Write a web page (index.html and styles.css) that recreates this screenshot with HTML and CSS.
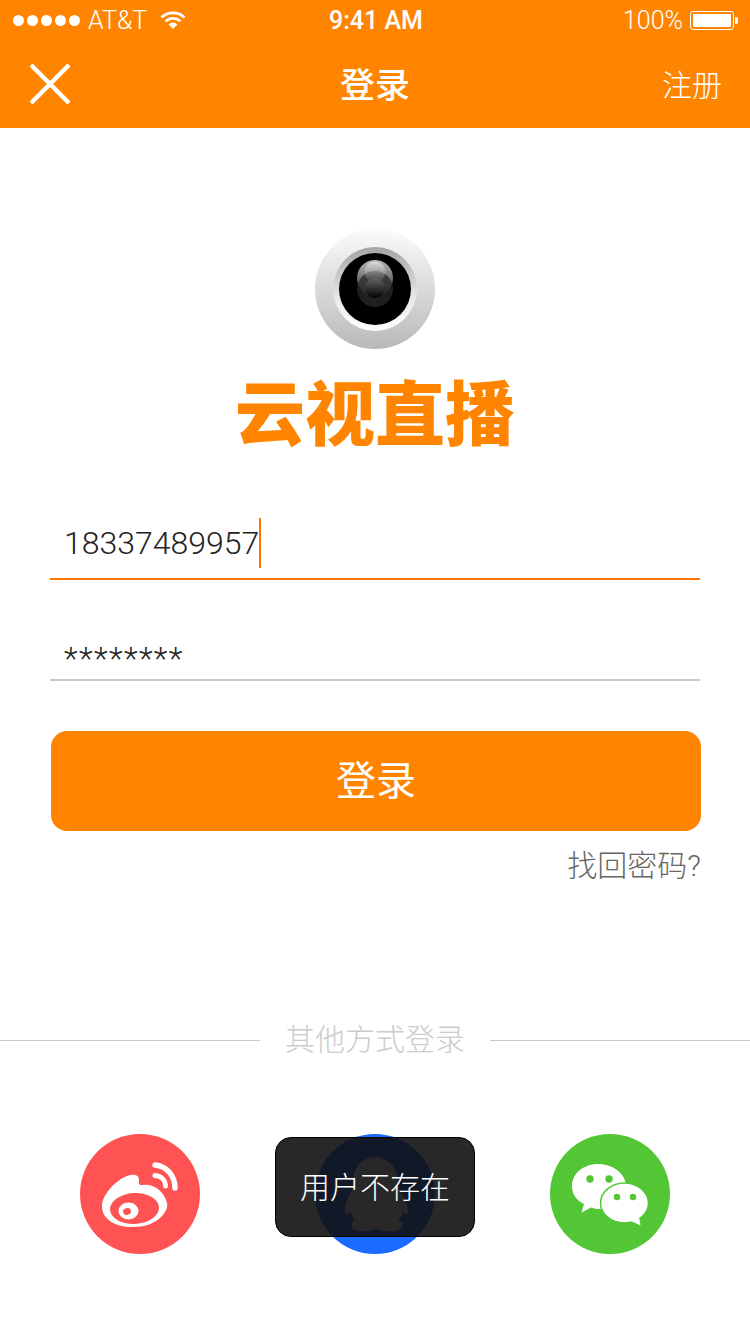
FILE: index.html
```html
<!DOCTYPE html>
<html>
<head>
<meta charset="utf-8">
<title>登录</title>
<link rel="stylesheet" href="styles.css">
</head>

<body>
<div id="wrapper">
	<div class="header">
		<div class="status-bar">
			<div class="status-left">
				<div class="signal"><i></i><i></i><i></i><i></i><i></i></div>
				<span class="carrier">AT&amp;T</span>
				<svg class="wifi" width="26" height="20" viewBox="0 0 26 20">
					<path d="M1.5 7.5a16.5 16.5 0 0 1 23 0" fill="none" stroke="#fff" stroke-width="2.6"/>
					<path d="M5.6 11.4a10.6 10.6 0 0 1 14.8 0" fill="none" stroke="#fff" stroke-width="2.6"/>
					<path d="M8.6 14.4a6.3 6.3 0 0 1 8.8 0L13 19z" fill="#fff"/>
				</svg>
			</div>
			<div class="status-time">9:41 AM</div>
			<div class="status-right">
				<span>100%</span>
				<div class="battery"><div class="battery-level"></div></div>
				<div class="battery-cap"></div>
			</div>
		</div>
		<div class="nav">
			<svg class="close" width="40" height="40" viewBox="0 0 40 40">
				<path d="M1 1L39 39M39 1L1 39" stroke="#fff" stroke-width="4.4" fill="none"/>
			</svg>
			<div class="nav-title">登录</div>
			<div class="nav-link">注册</div>
		</div>
	</div>

	<div class="brand">
		<!-- 镜头图标 -->
		<svg class="lens" width="120" height="120" viewBox="0 0 120 120">
			<defs>
				<linearGradient id="lensOuter" x1="0" y1="0" x2="0" y2="1">
					<stop offset="0" stop-color="#fbfbfb"/>
					<stop offset="1" stop-color="#b9b9bb"/>
				</linearGradient>
				<linearGradient id="lensRing" x1="0" y1="0" x2="0" y2="1">
					<stop offset="0" stop-color="#a4a4a4"/>
					<stop offset="0.6" stop-color="#e8e8e8"/>
					<stop offset="1" stop-color="#ffffff"/>
				</linearGradient>
				<linearGradient id="lensGlow" x1="0" y1="0" x2="0" y2="1">
					<stop offset="0" stop-color="#b8b8b8"/>
					<stop offset="0.6" stop-color="#666"/>
					<stop offset="1" stop-color="#333"/>
				</linearGradient>
				<linearGradient id="lensTop" x1="0" y1="0" x2="0" y2="1">
					<stop offset="0" stop-color="#ddd"/>
					<stop offset="1" stop-color="#888" stop-opacity="0.1"/>
				</linearGradient>
				<linearGradient id="lensPupil" x1="0" y1="0" x2="0" y2="1">
					<stop offset="0" stop-color="#666"/>
					<stop offset="1" stop-color="#000"/>
				</linearGradient>
			</defs>
			<circle cx="60" cy="60" r="60" fill="url(#lensOuter)"/>
			<circle cx="60" cy="60" r="42" fill="url(#lensRing)"/>
			<circle cx="60" cy="60" r="36"/>
			<circle cx="60" cy="49" r="18" fill="url(#lensGlow)"/>
			<circle cx="60" cy="60" r="18" fill="#2a2a2a" opacity="0.75"/>
			<circle cx="60" cy="43" r="10.5" fill="url(#lensTop)"/>
			<circle cx="60" cy="59" r="10" fill="url(#lensPupil)"/>
		</svg>
		<div class="brand-name">云视直播</div>
	</div>

	<div class="form">
		<div class="field field-active">
			<span class="field-text">18337489957</span><span class="caret"></span>
		</div>
		<div class="field">
			<span class="field-text field-secret">********</span>
		</div>
		<div class="btn">登录</div>
		<div class="forgot">找回密码?</div>
	</div>

	<div class="divider">
		<div class="divider-line"></div>
		<div class="divider-text">其他方式登录</div>
		<div class="divider-line"></div>
	</div>

	<div class="social">
		<div class="social-item weibo">
			<svg width="120" height="120" viewBox="0 0 120 120">
				<path d="M22 72C22 62 34 47 47 42C54 39.500 59 41 59 46C59 49 58.500 51 62 51C72 49 84 56 87 69C88 73 86 78 81 83C74 90 64 93 52 93C36 93 22 86 22 72Z" fill="#fff"/>
				<ellipse cx="54.500" cy="74.500" rx="24.500" ry="15.500" fill="#ff5252" transform="rotate(-3 54.500 74.500)"/>
				<ellipse cx="48.500" cy="77" rx="10" ry="8.500" fill="#fff"/>
				<ellipse cx="47" cy="77.500" rx="4" ry="3.300" fill="#ff5252" transform="rotate(-15 47 77.500)"/>
				<path d="M75 31C86 32 95 41 95 54" fill="none" stroke="#fff" stroke-width="5.500" stroke-linecap="round"/>
				<path d="M75 41.500C81 42 85.500 46 85.500 52" fill="none" stroke="#fff" stroke-width="5" stroke-linecap="round"/>
			</svg>
		</div>
		<div class="social-item qq">
			<svg width="120" height="120" viewBox="0 0 120 120">
				<path d="M60 23C49 23 39 32 38 46C38 51 38 54 36 58C32 65 29 72 30 79C31 81 33 81 36 78C37 81 38 84 40 86C36 88 36 92 37 94C39 97 48 98 54 97C57 96 59 95 60 95C62 95 65 96 68 97C74 98 84 97 87 94C88 92 88 88 83 86C85 84 87 81 88 78C90 81 92 81 93 79C94 72 90 65 86 58C84 54 83 51 83 46C82 32 71 23 60 23Z" fill="#fff"/>
			</svg>
		</div>
		<div class="social-item wechat">
			<svg width="120" height="120" viewBox="0 0 120 120">
				<path d="M48 30C33 30 22 40 22 52C22 60 26 66 34 70L31.500 78.500L41 73.500C44 74.500 47 75 50 75C66 75 76 65 76 52C76 40 63 30 48 30Z" fill="#fff"/>
				<circle cx="40" cy="45" r="3.700" fill="#52c634"/>
				<circle cx="59" cy="45" r="3.700" fill="#52c634"/>
				<ellipse cx="74.500" cy="69" rx="24" ry="20" fill="#fff" stroke="#52c634" stroke-width="1.500"/>
				<path d="M81 87L90.500 91.500L89 83z" fill="#fff"/>
				<circle cx="67" cy="63" r="3.200" fill="#52c634"/>
				<circle cx="83" cy="63" r="3.200" fill="#52c634"/>
			</svg>
		</div>
		<div class="toast">用户不存在</div>
	</div>
</div>
</body>
</html>
```

FILE: styles.css
```css
html, body {
	margin: 0px;
	padding: 0px;
}
#wrapper {
	font-family: "Liberation Sans", "Noto Sans CJK SC", sans-serif;
	width: 750px;
	height: 1334px;
	background: #fff;
	overflow: hidden;
}
.header {
	background: #ff8500;
	color: #fff;
}
.status-bar {
	height: 40px;
	display: grid;
	grid-template-columns: 1fr auto 1fr;
	align-items: center;
	font-family: "Roboto", "Liberation Sans", sans-serif;
	font-size: 25px;
}
.status-left {
	display: flex;
	align-items: center;
	padding-left: 13px;
}
.signal {
	display: flex;
	gap: 3px;
}
.signal i {
	width: 11px;
	height: 11px;
	background: #fff;
	border-radius: 50%;
}
.carrier {
	margin-left: 8px;
	font-weight: 300;
}
.wifi {
	margin-left: 13px;
}
.status-time {
	font-weight: 500;
	padding-left: 2px;
}
.status-right {
	display: flex;
	align-items: center;
	justify-content: flex-end;
	padding-right: 12px;
	font-weight: 300;
}
.battery {
	margin-left: 7px;
	width: 44px;
	height: 19px;
	box-sizing: border-box;
	border: 1px solid #fff;
	border-radius: 3px;
	padding: 2px;
}
.battery-level {
	height: 100%;
	background: #fff;
	border-radius: 1px;
}
.battery-cap {
	width: 3px;
	height: 7px;
	margin-left: 1px;
	background: #fff;
	border-radius: 0 2px 2px 0;
}
.nav {
	height: 88px;
	display: grid;
	grid-template-columns: 1fr auto 1fr;
	align-items: center;
	padding: 0px 30px;
}
.close {
	display: block;
}
.nav-title {
	align-self: start;
	font-size: 35px;
	font-weight: 500;
	line-height: 92px;
	height: 88px;
}
.nav-link {
	align-self: start;
	justify-self: end;
	margin-right: -2px;
	font-size: 30px;
	font-weight: 300;
	line-height: 92px;
	height: 88px;
}
.brand {
	padding-top: 101px;
	display: flex;
	flex-direction: column;
	align-items: center;
}
.lens {
	display: block;
}
.brand-name {
	margin-top: 25px;
	color: #ff8500;
	font-size: 70px;
	line-height: 85px;
	font-weight: 900;
	white-space: nowrap;
}
.form {
	padding: 49px 50px 0px 50px;
}
.field {
	height: 58px;
	padding: 0px 14px;
	display: flex;
	align-items: flex-end;
	border-bottom: 2px solid #c8c8c8;
	margin-bottom: 41px;
	color: #222;
}
.field-active {
	height: 60px;
	padding-bottom: 10px;
	border-bottom-color: #ff7300;
}
.field-text {
	font-family: "Roboto", "Liberation Sans", sans-serif;
	font-weight: 300;
	font-size: 32px;
	line-height: 50px;
}
.field-secret {
	letter-spacing: 1.400px;
	line-height: 30px;
	margin-bottom: 6px;
}
.caret {
	width: 2px;
	height: 50px;
	background: #ff7300;
}
.btn {
	margin: 50px -1px 0px 1px;
	height: 100px;
	line-height: 100px;
	text-align: center;
	color: #fff;
	background: #ff8500;
	border-radius: 16px;
	font-size: 40px;
}
.forgot {
	margin: 15px -1px 0px 0px;
	text-align: right;
	color: #666;
	font-family: "Roboto", "Noto Sans CJK SC", sans-serif;
	font-size: 30px;
	font-weight: 300;
	line-height: 40px;
}
.divider {
	margin-top: 134px;
	display: flex;
	align-items: center;
	gap: 25px;
	color: #ccc;
}
.divider-line {
	flex: 1;
	height: 1px;
	background: #c8c8c8;
}
.divider-text {
	font-size: 30px;
	font-weight: 300;
	line-height: 40px;
}
.social {
	position: relative;
	margin-top: 74px;
	padding: 0px 80px;
	display: flex;
	justify-content: space-between;
}
.social-item {
	width: 120px;
	height: 120px;
	border-radius: 50%;
}
.social-item svg {
	display: block;
}
.weibo {
	background: #ff5252;
}
.qq {
	background: #1a6bff;
}
.wechat {
	background: #52c634;
}
.toast {
	position: absolute;
	left: 275px;
	top: 3px;
	width: 200px;
	height: 100px;
	box-sizing: border-box;
	line-height: 100px;
	text-align: center;
	color: #fff;
	font-size: 30px;
	font-weight: 300;
	background: rgba(17, 17, 17, 0.9);
	border: 1px solid #000;
	border-radius: 16px;
}
```
